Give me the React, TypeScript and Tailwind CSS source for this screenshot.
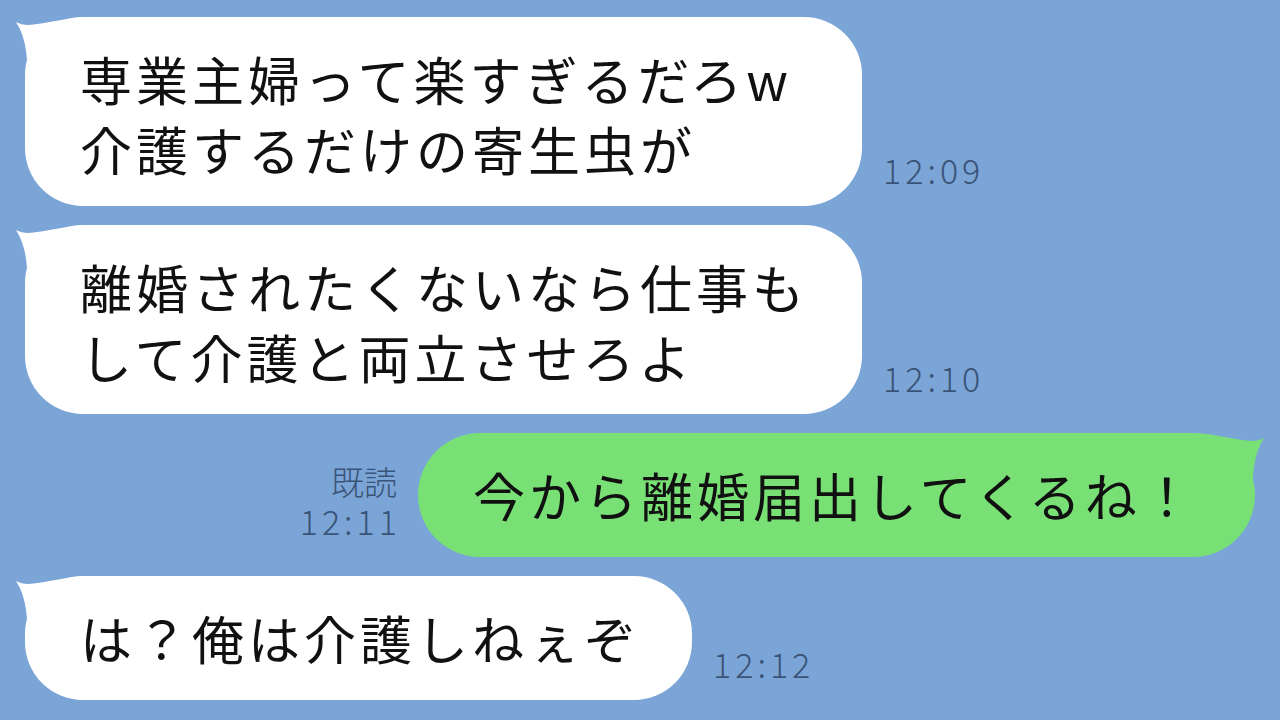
import type { ReactNode } from "react";

const jp = "font-['Noto_Sans_CJK_JP',sans-serif]";

function TailLeft({ color }: { color: string }) {
  return (
    <svg className="absolute left-[-10px] top-0" width="80" height="70" viewBox="-10 0 80 70">
      <path d="M -9 5 C 5 13 25 2 62 0 L 62 66 L 2 66 C 3 44 2 22 -9 5 Z" fill={color} />
    </svg>
  );
}

function TailRight({ color }: { color: string }) {
  return (
    <svg className="absolute right-[-10px] top-0" width="80" height="70" viewBox="-10 0 80 70">
      <g transform="translate(60 0) scale(-1 1)">
        <path d="M -9 5 C 5 13 25 2 62 0 L 62 66 L 2 66 C 3 44 2 22 -9 5 Z" fill={color} />
      </g>
    </svg>
  );
}

function Time({ children }: { children: ReactNode }) {
  return (
    <div className={`${jp} text-[34px] leading-[40px] tracking-[4px] text-[#3a5478] font-light`}>{children}</div>
  );
}

function Incoming({ lines, time, width, pb }: { lines: string[]; time: string; width: string; pb: string }) {
  return (
    <div className="flex items-end gap-[21px]">
      <div className={`relative ${width} ${pb} bg-white rounded-[58px] pl-[55px] pt-[27px]`}>
        <TailLeft color="#ffffff" />
        <div className={`relative ${jp} text-[52px] leading-[70px] tracking-[4px] text-[#111]`}>
          {lines.map((l) => (
            <div key={l}>{l}</div>
          ))}
        </div>
      </div>
      <div className="pb-[16px]">
        <Time>{time}</Time>
      </div>
    </div>
  );
}

export default function App() {
  return (
    <div className="w-[1280px] h-[720px] overflow-hidden bg-[#7ba5d6] flex flex-col gap-[19px] pt-[17px] pl-[25px] pr-[25px]">
      <Incoming width="w-[837px]" pb="pb-[22px]" lines={["専業主婦って楽すぎるだろw", "介護するだけの寄生虫が"]} time="12:09" />
      <Incoming width="w-[837px]" pb="pb-[22px]" lines={["離婚されたくないなら仕事も", "して介護と両立させろよ"]} time="12:10" />

      <div className="flex items-end justify-end gap-[21px]">
        <div className="flex flex-col items-end pb-[16px]">
          <div className={`${jp} text-[33px] leading-[40px] text-[#3a5478] font-light`}>既読</div>
          <div className="mr-[-4px]">
            <Time>12:11</Time>
          </div>
        </div>
        <div className="relative w-[837px] bg-[#79e076] rounded-[62px] pl-[55px] pt-[27px] pb-[27px]">
          <TailRight color="#79e076" />
          <div className={`relative ${jp} text-[52px] leading-[70px] tracking-[4px] text-[#111]`}>
            今から離婚届出してくるね！
          </div>
        </div>
      </div>

      <Incoming width="w-[667px]" pb="pb-[27px]" lines={["は？俺は介護しねぇぞ"]} time="12:12" />
    </div>
  );
}
